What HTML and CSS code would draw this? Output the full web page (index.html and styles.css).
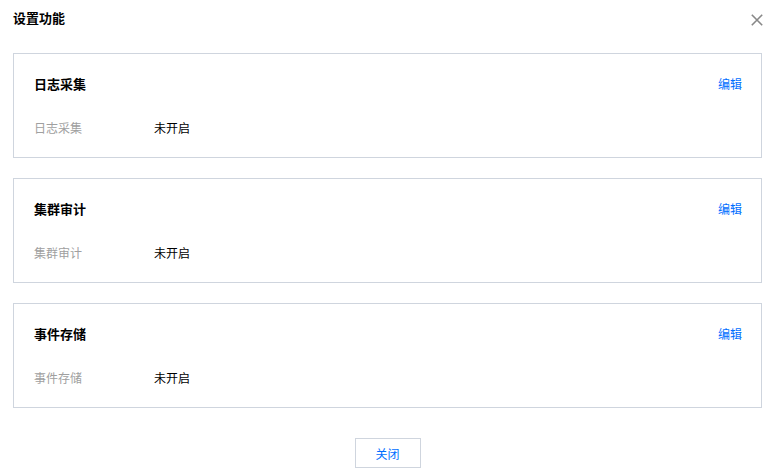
FILE: index.html
```html
<!DOCTYPE html>
<html lang="zh">
<head>
<meta charset="utf-8">
<link rel="stylesheet" href="styles.css">
</head>
<body>
<div class="dialog">
  <div class="header">
    <h3 class="title">设置功能</h3>
    <button class="close" aria-label="关闭">
      <svg width="12" height="12" viewBox="0 0 12 12"><path d="M0.8 0.8 L11.2 11.2 M11.2 0.8 L0.8 11.2" stroke="#888" stroke-width="1.6" fill="none"/></svg>
    </button>
  </div>
  <div class="panels">
    <div class="panel">
      <div class="panel-head"><span class="panel-title">日志采集</span><a class="edit">编辑</a></div>
      <div class="row"><span class="label">日志采集</span><span class="value">未开启</span></div>
    </div>
    <div class="panel">
      <div class="panel-head"><span class="panel-title">集群审计</span><a class="edit">编辑</a></div>
      <div class="row"><span class="label">集群审计</span><span class="value">未开启</span></div>
    </div>
    <div class="panel">
      <div class="panel-head"><span class="panel-title">事件存储</span><a class="edit">编辑</a></div>
      <div class="row"><span class="label">事件存储</span><span class="value">未开启</span></div>
    </div>
  </div>
  <div class="footer"><button class="btn">关闭</button></div>
</div>
</body>
</html>
```
FILE: styles.css
```css
* { box-sizing: border-box; }
html, body { margin: 0; padding: 0; background: #fff; }
body {
  font-family: "Noto Sans CJK SC", "Noto Sans", sans-serif;
  font-size: 12px;
  color: #000;
}
.dialog { width: 779px; height: 473px; padding: 0 17px 0 13px; }
.header { display: flex; justify-content: space-between; align-items: center; height: 36px; }
.title { margin: 0; font-size: 13px; font-weight: 700; line-height: 20px; color: #000; }
.close { border: 0; background: none; padding: 0; margin-right: -1px; width: 12px; height: 12px; display: flex; cursor: pointer; margin-top: 4px; }
.panels { display: flex; flex-direction: column; gap: 20px; margin-top: 17px; }
.panel { border: 1px solid #cfd5de; padding: 20px 19px 18px 20px; height: 105px; }
.panel-head { display: flex; justify-content: space-between; align-items: center; height: 20px; }
.panel-title { font-size: 13px; font-weight: 700; line-height: 20px; }
.edit { color: #006eff; font-size: 12px; line-height: 20px; cursor: pointer; }
.row { display: flex; margin-top: 24px; line-height: 20px; }
.label { width: 120px; color: #a0a0a0; }
.value { color: #000; }
.footer { display: flex; justify-content: center; margin-top: 30px; }
.btn { width: 66px; height: 30px; border: 1px solid #cfd5de; background: #fff; color: #006eff; font-family: inherit; font-size: 12px; padding: 0; cursor: pointer; }
```
